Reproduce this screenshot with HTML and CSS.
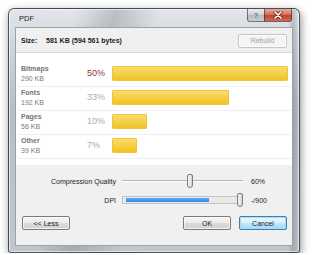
FILE: index.html
```html
<!DOCTYPE html>
<html lang="en">
<head>
    <meta charset="UTF-8">
    <title>PDF</title>
    <link rel="stylesheet" href="styles.css">
</head>
<body>
    <div class="stage">
        <div class="window">
            <div class="titlebar">
                <span class="title">PDF</span>
                <div class="caption">
                    <span class="cap-btn help">?</span>
                    <span class="cap-btn close">
                        <svg width="10" height="8" viewBox="0 0 10 8">
                            <path d="M2 1 L8 7 M8 1 L2 7" stroke="#6b2a20" stroke-width="3.2" stroke-linecap="round"/>
                            <path d="M2 1 L8 7 M8 1 L2 7" stroke="#ffffff" stroke-width="1.7" stroke-linecap="round"/>
                        </svg>
                    </span>
                </div>
            </div>

            <div class="client">
                <div class="summary">
                    <span class="size-label">Size:</span>
                    <span class="size-value">581 KB (594 561 bytes)</span>
                    <button class="btn rebuild" disabled>Rebuild</button>
                </div>

                <div class="breakdown">
                    <div class="row">
                        <div class="name"><b>Bitmaps</b><span>290 KB</span></div>
                        <div class="pct top">50%</div>
                        <div class="bar-cell"><div class="bar" style="width: 100%"></div></div>
                    </div>
                    <div class="row">
                        <div class="name"><b>Fonts</b><span>192 KB</span></div>
                        <div class="pct">33%</div>
                        <div class="bar-cell"><div class="bar" style="width: 66.5%"></div></div>
                    </div>
                    <div class="row">
                        <div class="name"><b>Pages</b><span>56 KB</span></div>
                        <div class="pct">10%</div>
                        <div class="bar-cell"><div class="bar" style="width: 20%"></div></div>
                    </div>
                    <div class="row">
                        <div class="name"><b>Other</b><span>39 KB</span></div>
                        <div class="pct">7%</div>
                        <div class="bar-cell"><div class="bar" style="width: 14%"></div></div>
                    </div>
                </div>

                <div class="controls">
                    <div class="setting">
                        <label>Compression Quality</label>
                        <div class="slider"><span class="thumb"></span></div>
                        <span class="value">60%</span>
                    </div>
                    <div class="setting">
                        <label>DPI</label>
                        <div class="gauge"><div class="fill"></div><span class="thumb"></span></div>
                        <span class="value">-/900</span>
                    </div>
                    <div class="actions">
                        <button class="btn">&lt;&lt; Less</button>
                        <button class="btn ok">OK</button>
                        <button class="btn default">Cancel</button>
                    </div>
                </div>
            </div>
        </div>
    </div>
</body>
</html>
```

FILE: styles.css
```css
body {
    margin: 0;
    padding: 0;
    background-color: #ffffff;
    font-family: "Liberation Sans", Arial, sans-serif;
    color: #1e1e1e;
}
.stage {
    padding: 8px 0 0 8px;
}
.window {
    width: 278px;
    height: 237px;
    border: 1px solid rgba(30, 35, 40, 0.75);
    border-radius: 6px 6px 3px 3px;
    background:
        linear-gradient(100deg, rgba(255,255,255,0) 20%, rgba(90,95,100,0.28) 32%, rgba(255,255,255,0) 46%),
        linear-gradient(90deg, rgba(0,0,0,0) 96%, rgba(70,75,80,0.25) 98%, rgba(0,0,0,0) 100%),
        linear-gradient(180deg, #e3e7ec 0%, #d3d9df 12%, #b9bec4 40%, #c2c7cc 100%);
    box-shadow: 1px 3px 8px rgba(0, 0, 0, 0.45), inset 0 0 0 1px rgba(255, 255, 255, 0.55);
    display: flex;
    flex-direction: column;
    padding: 0 6px 6px 6px;
}
.titlebar {
    height: 18px;
    display: flex;
    align-items: center;
}
.title {
    font-size: 7.5px;
    padding-left: 4px;
    color: #1b1b1b;
}
.caption {
    margin-left: auto;
    align-self: flex-start;
    display: flex;
    margin-right: 1px;
}
.cap-btn {
    height: 13px;
    display: flex;
    align-items: center;
    justify-content: center;
    border: 1px solid rgba(40, 45, 50, 0.6);
    border-top: none;
    box-sizing: border-box;
}
.help {
    width: 17px;
    border-radius: 0 0 0 3px;
    border-right: none;
    background: linear-gradient(180deg, #e8ebee 0%, #cdd2d7 50%, #b4babf 51%, #c9ced3 100%);
    font-size: 8px;
    font-weight: bold;
    color: #5d646b;
    text-shadow: 0 0 1px #ffffff;
}
.close {
    width: 28px;
    border-radius: 0 0 3px 0;
    background: linear-gradient(180deg, #e9a99b 0%, #d7725f 45%, #c1422b 55%, #d46c55 100%);
}
.client {
    flex: 1;
    background-color: #f0f0f0;
    border: 1px solid #9aa2ab;
    display: flex;
    flex-direction: column;
}
.summary {
    height: 24px;
    display: flex;
    align-items: center;
    padding: 0 5px;
    font-size: 7px;
    font-weight: bold;
    color: #222222;
}
.size-label {
    width: 25px;
}
.btn {
    font-family: "Liberation Sans", Arial, sans-serif;
    font-size: 7px;
    color: #1e1e1e;
    height: 14px;
    width: 48px;
    padding: 0;
    border: 1px solid #7a7a7a;
    border-radius: 2px;
    background: linear-gradient(180deg, #f4f4f4 0%, #ececec 48%, #dcdcdc 52%, #d0d0d0 100%);
    box-shadow: inset 0 0 0 1px rgba(255, 255, 255, 0.7);
}
.rebuild {
    margin-left: auto;
    margin-top: 1px;
    width: 49px;
    color: #a3a3a3;
    font-weight: normal;
    border-color: #c6c6c6;
    background: #f4f4f4;
}
.breakdown {
    background-color: #ffffff;
    border-top: 1px solid #d9d9d9;
    padding: 10px 0 6px 0;
}
.row {
    display: grid;
    grid-template-columns: 66px 25px 176px;
    height: 23px;
    margin-left: 1px;
    padding-left: 4px;
    border-bottom: 1px solid #eceef3;
}
.name {
    display: flex;
    flex-direction: column;
    font-size: 7px;
    line-height: 10px;
    padding-top: 1px;
    color: #7a7a7a;
}
.name b {
    color: #767676;
}
.pct {
    font-size: 9px;
    line-height: 11px;
    margin-top: 5px;
    color: #acacac;
}
.pct.top {
    color: #8c3a3a;
}
.bar-cell {
    padding-top: 3px;
}
.bar {
    height: 15px;
    box-sizing: border-box;
    border: 1px solid #f0c33a;
    border-radius: 1px;
    background: linear-gradient(180deg, #f8dd72 0%, #f5cf48 50%, #f2c225 100%);
}
.controls {
    padding: 8px 5px 8px 0;
    display: flex;
    flex-direction: column;
}
.setting {
    height: 16px;
    display: grid;
    grid-template-columns: 106px 121px auto;
    align-items: center;
    font-size: 7px;
    color: #1e1e1e;
}
.setting + .setting {
    margin-top: 3px;
}
.setting label {
    text-align: right;
    padding-right: 6px;
}
.setting .value {
    padding-left: 8px;
}
.slider {
    position: relative;
    height: 2px;
    border-top: 1px solid #b4b4b4;
    border-bottom: 1px solid #ffffff;
    box-sizing: border-box;
    background: #e2e2e2;
}
.thumb {
    position: absolute;
    width: 6px;
    height: 14px;
    box-sizing: border-box;
    border: 1px solid #7c7c7c;
    border-radius: 2px 2px 3px 3px;
    background: linear-gradient(90deg, #f6f6f6 0%, #e4e4e4 60%, #cfcfcf 100%);
}
.slider .thumb {
    left: 65px;
    top: -7px;
}
.gauge {
    position: relative;
    width: 116px;
    height: 8px;
    box-sizing: border-box;
    border: 1px solid #c4c4c4;
    background: #e9e9e9;
    padding: 1px 3px;
}
.fill {
    width: 83px;
    height: 4px;
    background: linear-gradient(180deg, #5aaef5 0%, #2f8ae6 100%);
}
.gauge .thumb {
    right: -6px;
    top: -4px;
}
.actions {
    display: flex;
    margin-top: 8px;
    padding-left: 6px;
}
.ok {
    margin-left: auto;
    margin-right: 8px;
}
.default {
    border-color: #3c7fb1;
    box-shadow: inset 0 0 0 1px #a7dcf5;
    background: linear-gradient(180deg, #eaf6fd 0%, #d9f0fc 48%, #bee6fd 52%, #a7d9f5 100%);
}
```
